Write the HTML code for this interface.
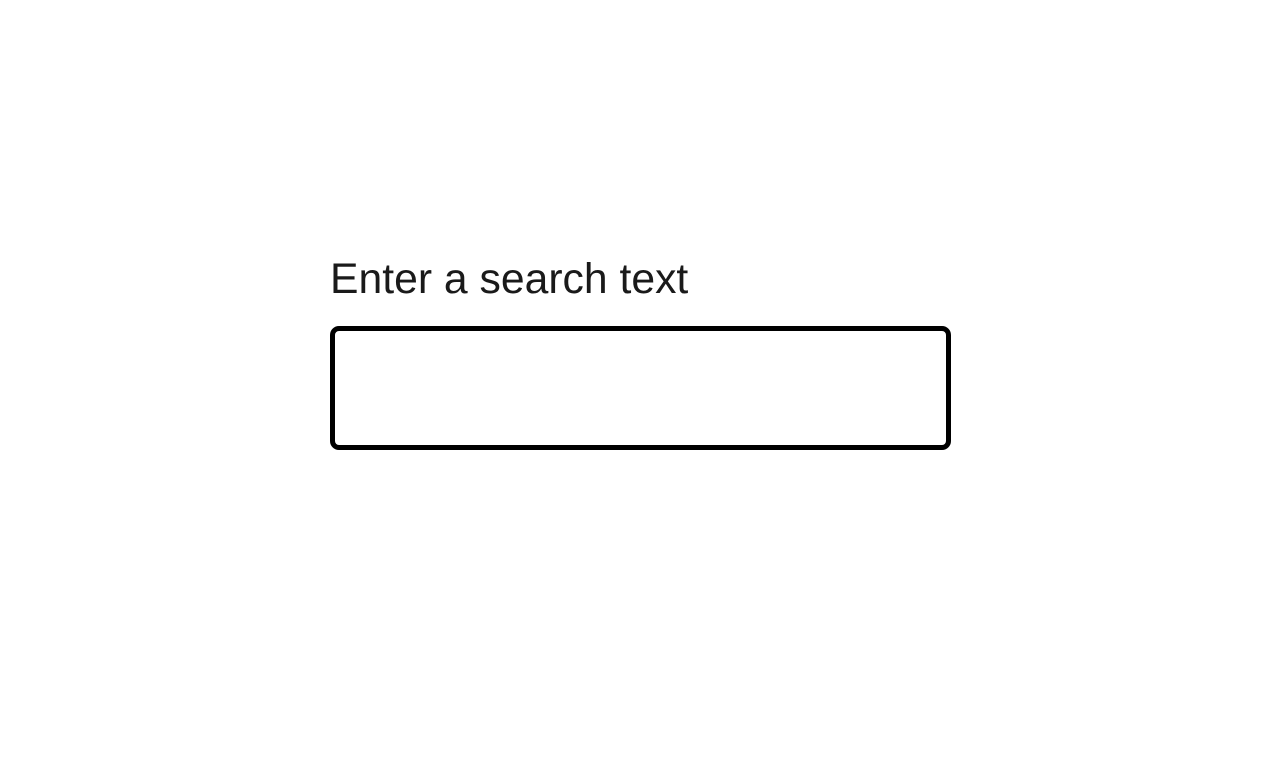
<!DOCTYPE html>
<html><head><style>
html,body{margin:0;background:#fff;width:1285px;height:778px;overflow:hidden}
.t{position:absolute;left:330px;top:258px;font:42.7px/42px "Liberation Sans",Arial,sans-serif;color:#1a1a1a;white-space:nowrap}
.b{position:absolute;left:330px;top:326px;width:611px;height:114px;border:5px solid #000;border-radius:9px}
</style></head><body>
<div class="t">Enter a search text</div>
<div class="b"></div>
</body></html>
